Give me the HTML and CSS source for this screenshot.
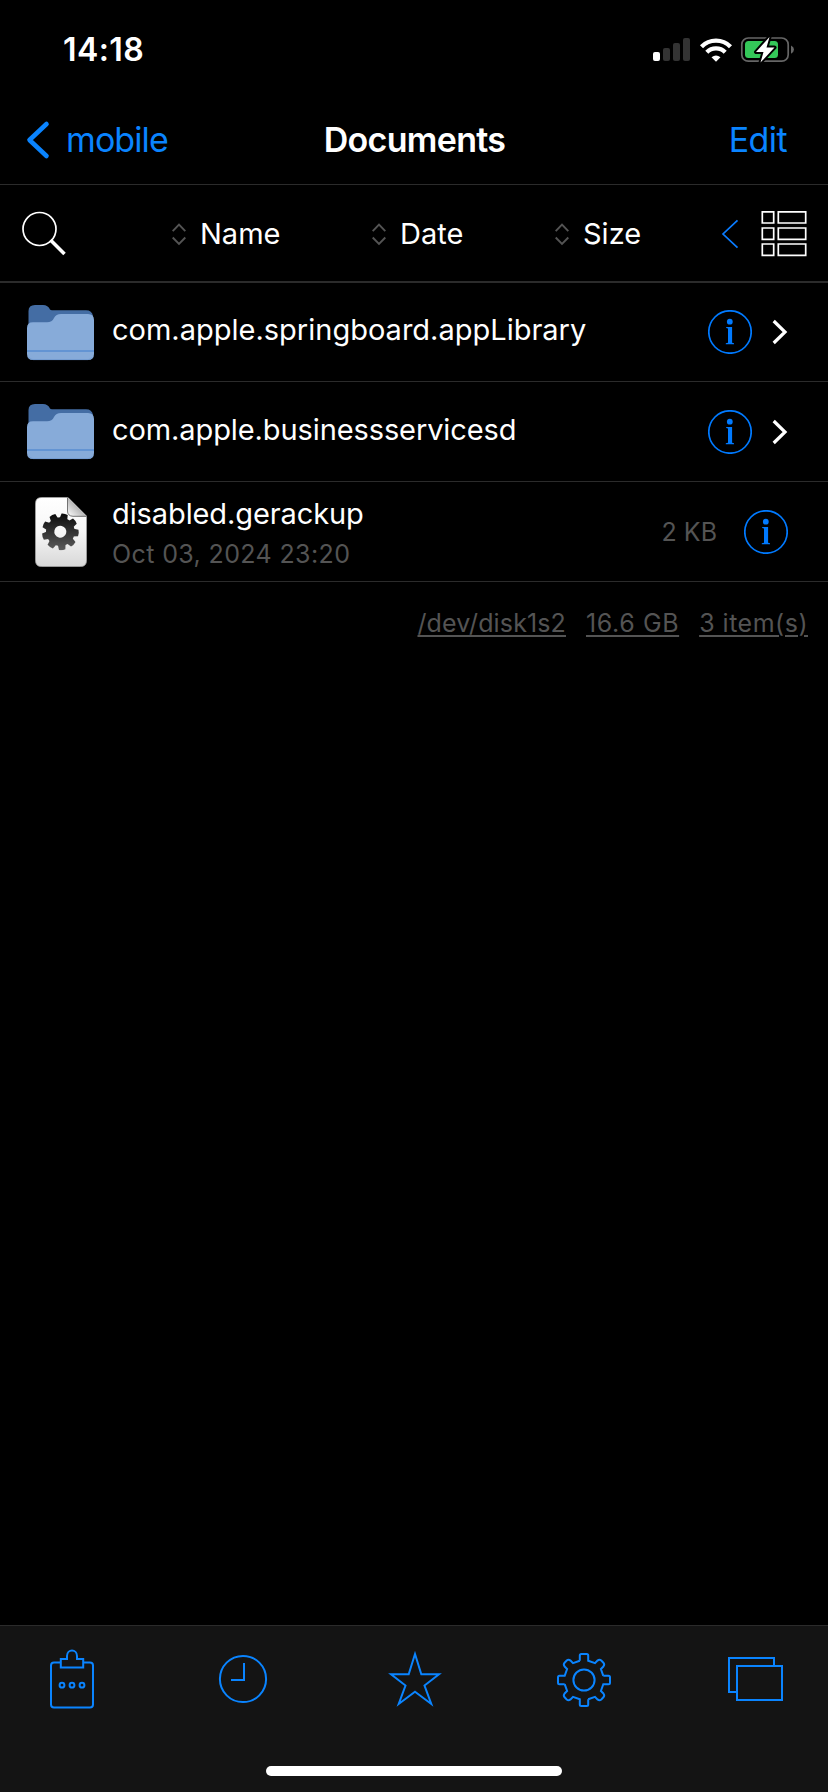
FILE: index.html
```html
<!DOCTYPE html>
<html lang="en">
<head>
<meta charset="utf-8">
<title>Documents</title>
<link rel="stylesheet" href="styles.css">
</head>
<body>
<svg width="0" height="0" class="defs" aria-hidden="true">
  <defs>
    <linearGradient id="paper" x1="0" y1="0" x2="0" y2="1"><stop offset="0" stop-color="#fff"/><stop offset=".5" stop-color="#f6f6f6"/><stop offset="1" stop-color="#d8d8d8"/></linearGradient>
    <linearGradient id="cog" x1="0" y1="0" x2="0" y2="1"><stop offset="0" stop-color="#080808"/><stop offset="1" stop-color="#5c5c5c"/></linearGradient>
    <linearGradient id="fold" x1="0" y1="1" x2=".6" y2=".4"><stop offset="0" stop-color="#fff"/><stop offset="1" stop-color="#aaa"/></linearGradient>
    <symbol id="folder" viewBox="0 0 68 56">
      <path d="M1.500 22V6Q1.500 0 8 0H16Q21 0 23 4.500Q23.500 5.300 25 5.300H59Q65 5.300 66 11V22Z" fill="#446da4"/>
      <path d="M0 23Q0 17.300 6 17.300H20Q25 17.300 27 13Q29 9 34 9H61Q67 9 67 15V49Q67 55 61 55H6Q0 55 0 49Z" fill="#87abd9"/>
      <path d="M0 45H67V47H0Z" fill="#6394d3"/>
      <path d="M1.500 52Q3 54.600 6 54.600H61Q64 54.600 65.500 52" fill="none" stroke="#6f98cf" stroke-width=".8"/>
    </symbol>
    <symbol id="info" viewBox="0 0 44 44">
      <circle cx="22" cy="22" r="21.200" fill="none" stroke="#007aff" stroke-width="1.700"/>
      <circle cx="21.800" cy="11.700" r="2.900" fill="#007aff"/>
      <path d="M18.200 17H24.100V32.700L26 33.200V34.200H17.800V33.200L20 32.700V18.500L18.200 18Z" fill="#007aff"/>
    </symbol>
    <symbol id="sort" viewBox="0 0 16 24">
      <path d="M1.700 9.200L8 2.700L14.300 9.200M1.700 15.500L8 21.800L14.300 15.500" fill="none" stroke="#545454" stroke-width="1.900"/>
    </symbol>
    <symbol id="chevron" viewBox="0 0 16 26">
      <path d="M1.700 2L13 13L1.700 24" fill="none" stroke="#fff" stroke-width="3.200"/>
    </symbol>
    <path id="gear-quarter" d="M-4.200-19.300V-24.500Q-4.200-26-2.700-26H2.700Q4.200-26 4.200-24.500V-19.300L11-16.900L13.500-19.400Q15.500-21 17.300-19.400L19.400-17.300Q21-15.500 19.400-13.500L16.900-11L19.300-4.200"/>
  </defs>
</svg>
<div class="screen">
  <header class="status">
    <span class="time">14:18</span>
    <span class="indicators">
      <svg width="38" height="24" viewBox="0 0 38 24"><rect x="0" y="14" width="7" height="9" rx="2" fill="#fff"/><rect x="10" y="10" width="7" height="13" rx="2" fill="#333"/><rect x="20" y="5" width="7" height="18" rx="2" fill="#333"/><rect x="30" y="0" width="7" height="23" rx="2" fill="#333"/></svg>
      <svg width="32" height="24" viewBox="0 0 32 24"><g fill="none" stroke="#fff" stroke-width="4.300"><path d="M1.500 8.700A20.500 20.500 0 0 1 30.500 8.700"/><path d="M6.800 14.200A13 13 0 0 1 25.200 14.200"/></g><path d="M11.500 19.300Q16 15.600 20.500 19.300L16 23.700Z" fill="#fff"/></svg>
      <svg width="54" height="28" viewBox="0 0 54 28"><rect x=".8" y="2" width="46.400" height="23.200" rx="6.500" fill="none" stroke="#666" stroke-width="1.700"/><rect x="4" y="5" width="33" height="17" rx="3.500" fill="#34c759"/><path d="M50 9.500Q53 11 53 13.500T50 17.800Z" fill="#666"/><path d="M28.500 1L15 16H22.500L19.500 26.500L33.500 11.500H25.500Z" fill="#fff" stroke="#000" stroke-width="4" stroke-linejoin="round" paint-order="stroke"/></svg>
    </span>
  </header>
  <nav class="nav">
    <a class="back"><svg width="24" height="40" viewBox="0 0 24 40"><path d="M22.500 4L5.500 20L22.500 36" fill="none" stroke="#0a84ff" stroke-width="4.600" stroke-linecap="round" stroke-linejoin="round"/></svg><span class="back-label">mobile</span></a>
    <h1 class="title">Documents</h1>
    <a class="edit">Edit</a>
  </nav>
  <div class="toolbar">
    <svg width="46" height="46" viewBox="0 0 46 46"><circle cx="18.500" cy="18" r="16.500" fill="none" stroke="#fff" stroke-width="1.700"/><path d="M29.500 29L43.500 43" stroke="#fff" stroke-width="3.500"/></svg>
    <div class="sort"><svg width="16" height="24"><use href="#sort"/></svg><span>Name</span></div>
    <div class="sort"><svg width="16" height="24"><use href="#sort"/></svg><span>Date</span></div>
    <div class="sort"><svg width="16" height="24"><use href="#sort"/></svg><span>Size</span></div>
    <svg width="18" height="30" viewBox="0 0 18 30"><path d="M16.500 1.300L2 15L16.500 28.700" fill="none" stroke="#0a7cff" stroke-width="1.700"/></svg>
    <svg width="46" height="46" viewBox="0 0 46 46"><path d="M1.300.800H12.700V12H1.300ZM17.300.800H44.700V12H17.300ZM1.300 17H12.700V28.300H1.300ZM17.300 17H44.700V28.300H17.300ZM1.300 33H12.700V44.300H1.300ZM17.300 33H44.700V44.300H17.300Z" fill="none" stroke="#fff" stroke-width="1.700"/></svg>
  </div>
  <main class="files">
    <div class="row">
      <div class="thumb"><svg width="68" height="56"><use href="#folder"/></svg></div>
      <div class="name single n1">com.apple.springboard.appLibrary</div>
      <svg width="44" height="44"><use href="#info"/></svg>
      <svg class="go" width="16" height="26"><use href="#chevron"/></svg>
    </div>
    <div class="row">
      <div class="thumb"><svg width="68" height="56"><use href="#folder"/></svg></div>
      <div class="name single n2">com.apple.businessservicesd</div>
      <svg width="44" height="44"><use href="#info"/></svg>
      <svg class="go" width="16" height="26"><use href="#chevron"/></svg>
    </div>
    <div class="row">
      <div class="thumb"><svg width="52" height="70" viewBox="0 0 52 70">
        <path d="M6.500.500H33L51.500 19V63.500Q51.500 69.500 45.500 69.500H6.500Q.500 69.500.500 63.500V6.500Q.500.500 6.500.500Z" fill="url(#paper)" stroke="#aaa" stroke-width=".7"/>
        <path d="M32.500.500L51.500 19.500H38Q32.500 19.500 32.500 14Z" fill="url(#fold)"/><path d="M32.500.500V14Q32.500 19 38 19.300H51.500" fill="none" stroke="#555" stroke-width=".8"/>
        <mask id="cog-mask"><g fill="#fff" transform="translate(25.300 34.700) rotate(14)"><circle r="14.300"/><path id="tooth" d="M-4-12L-3.200-18Q0-19 3.200-18L4-12Z"/><use href="#tooth" transform="rotate(40)"/><use href="#tooth" transform="rotate(80)"/><use href="#tooth" transform="rotate(120)"/><use href="#tooth" transform="rotate(160)"/><use href="#tooth" transform="rotate(200)"/><use href="#tooth" transform="rotate(240)"/><use href="#tooth" transform="rotate(280)"/><use href="#tooth" transform="rotate(320)"/><circle r="6" fill="#000"/></g></mask>
        <rect x="6" y="15.500" width="39" height="38" fill="url(#cog)" mask="url(#cog-mask)"/>
      </svg></div>
      <div class="meta"><div class="name n3">disabled.gerackup</div><div class="date">Oct 03, 2024 23:20</div></div>
      <span class="size">2 KB</span>
      <svg class="info-end" width="44" height="44"><use href="#info"/></svg>
    </div>
  </main>
  <div class="summary"><span class="disk">/dev/disk1s2</span><span class="space">16.6 GB</span><span class="count">3 item(s)</span></div>
  <footer class="tabs">
    <div class="tab-icons">
      <svg width="46" height="60" viewBox="0 0.500 46 60" class="tab"><path d="M11 13H5Q2 13 2 16V55Q2 58 5 58H41Q44 58 44 55V16Q44 13 41 13H35"/><path d="M11.800 9.500H18V6.500C18 -.7 28 -.7 28 6.500V9.500H34.200V18H11.800Z"/><circle cx="13" cy="35.700" r="2.400"/><circle cx="23" cy="35.700" r="2.400"/><circle cx="33" cy="35.700" r="2.400"/></svg>
      <svg width="50" height="50" viewBox="0 1 50 50" class="tab"><circle cx="25" cy="25" r="23.100"/><path d="M26 9V26H13"/></svg>
      <svg width="58" height="58" viewBox="0 3 58 58" class="tab"><path d="M29 6L35.300 26.300H53L38.500 37.500L45.300 56L29 43.800L12.700 56L19.500 37.500L5 26.300H22.700Z"/></svg>
      <svg width="56" height="56" viewBox="-28 -28 56 56" class="tab"><circle r="10.600"/><use href="#gear-quarter"/><use href="#gear-quarter" transform="rotate(90)"/><use href="#gear-quarter" transform="rotate(180)"/><use href="#gear-quarter" transform="rotate(270)"/></svg>
      <svg width="56" height="46" viewBox="0 0 56 46" class="tab"><path d="M46 9V1H1V35H9M9 9H54V43H9Z"/></svg>
    </div>
    <div class="home"></div>
  </footer>
</div>
</body>
</html>
```
FILE: styles.css
```css
* { box-sizing: border-box; }
body { margin: 0; background: #000; color: #fff; font-family: Inter, "Liberation Sans", sans-serif; font-kerning: normal; }
svg { display: block; flex: none; overflow: visible; }
.defs { position: absolute; }
.screen { width: 828px; height: 1792px; display: flex; flex-direction: column; background: #000; overflow: hidden; white-space: nowrap; }
.status { height: 96px; padding: 3px 33px 0 63px; display: flex; align-items: center; justify-content: space-between; }
.time { font-size: 32px; font-weight: 600; line-height: 40px; letter-spacing: .4px; }
.indicators { display: flex; align-items: center; gap: 9px; }
.nav { height: 89px; padding: 0 41px 0 24px; display: grid; grid-template-columns: 1fr auto 1fr; align-items: center; border-bottom: 1px solid #2b2b2b; font-size: 34px; line-height: 42px; color: #0a84ff; }
.back { display: flex; align-items: center; gap: 18px; }
.back-label { letter-spacing: -.9px; }
.title { margin: 0; color: #fff; font-size: 34px; font-weight: 600; letter-spacing: -.7px; padding-left: 18px; }
.edit { text-align: right; letter-spacing: -.6px; }
.toolbar { height: 98px; padding: 1px 0 0 21px; display: grid; grid-template-columns: 150px 200px 183px 167px 40px 46px; align-items: center; border-bottom: 2px solid #2b2b2b; font-size: 29px; line-height: 36px; }
.sort { display: flex; align-items: center; gap: 13px; }
.sort span { padding-top: 1px; }
.row { height: 100px; display: flex; align-items: center; padding-right: 40px; border-bottom: 1px solid #2b2b2b; }
.row:first-child { height: 99px; }
.thumb { width: 112px; padding: 1px 0 0 9px; display: flex; justify-content: center; }
.name { font-size: 29px; line-height: 40px; flex: 1; }
.single { padding-bottom: 5px; }
.n2 { padding-bottom: 4px; letter-spacing: -.1px; }
.n3 { letter-spacing: -.1px; }
.go { margin-left: 20px; }
.meta { flex: 1; padding-top: 4px; }
.date, .size { color: #545454; font-size: 25px; line-height: 40px; }
.date { letter-spacing: .38px; }
.info-end { margin-left: 27px; }
.summary { height: 81px; padding-right: 20px; display: flex; align-items: center; justify-content: flex-end; gap: 20px; color: #545454; font-size: 25px; line-height: 32px; }
.summary span { text-decoration: underline; text-decoration-thickness: 2px; text-underline-offset: 3px; }
.disk { letter-spacing: .13px; }
.space { letter-spacing: .6px; }
.count { letter-spacing: .5px; }
.tabs { height: 167px; margin-top: auto; border-top: 1px solid #2b2b2b; background: #141414; display: flex; flex-direction: column; align-items: center; justify-content: space-between; padding-bottom: 16px; }
.tab-icons { width: 100%; height: 108px; padding-left: 49px; display: grid; grid-template-columns: 169px 168px 170px 172px 56px; align-items: center; }
.tab { fill: none; stroke: #0a84ff; stroke-width: 2; }
.home { width: 296px; height: 10px; border-radius: 5px; background: #fff; }
```
